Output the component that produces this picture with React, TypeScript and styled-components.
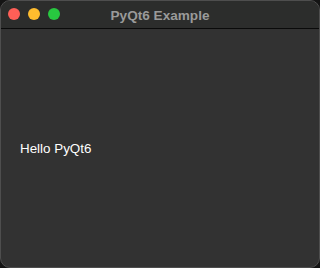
import React from 'react';
import styled, { createGlobalStyle } from 'styled-components';

const GlobalStyle = createGlobalStyle`
  html, body {
    margin: 0;
    padding: 0;
    background: #141414;
  }
  #root {
    width: 320px;
    height: 268px;
  }
`;

const Window = styled.div`
  box-sizing: border-box;
  width: 320px;
  height: 268px;
  border-radius: 10px;
  border: 1px solid #4e4e4e;
  overflow: hidden;
  display: flex;
  flex-direction: column;
  background: #323232;
  font-family: "Liberation Sans", Arial, sans-serif;
`;

const TitleBar = styled.div`
  position: relative;
  height: 27px;
  flex-shrink: 0;
  background: #2c2d2c;
  border-bottom: 1px solid #0a0a0a;
  display: flex;
  align-items: center;
  justify-content: center;
`;

const Lights = styled.div`
  position: absolute;
  left: 7px;
  top: 7px;
  display: flex;
  gap: 8px;
`;

const Light = styled.span<{ color: string }>`
  width: 12px;
  height: 12px;
  border-radius: 50%;
  background: ${(p) => p.color};
`;

const Title = styled.span`
  color: #9a9a9a;
  font-size: 13.6px;
  font-weight: bold;
  margin-top: 1px;
`;

const Content = styled.div`
  flex: 1;
  display: flex;
  align-items: center;
  padding: 0 19px;
`;

const Label = styled.span`
  color: #ffffff;
  font-size: 13.4px;
  margin-top: 1px;
`;

function App() {
  return (
    <>
      <GlobalStyle />
      <Window>
        <TitleBar>
          <Lights>
            <Light color="#fe5f57" />
            <Light color="#febc2e" />
            <Light color="#28c840" />
          </Lights>
          <Title>PyQt6 Example</Title>
        </TitleBar>
        <Content>
          <Label>Hello PyQt6</Label>
        </Content>
      </Window>
    </>
  );
}

export default App;
